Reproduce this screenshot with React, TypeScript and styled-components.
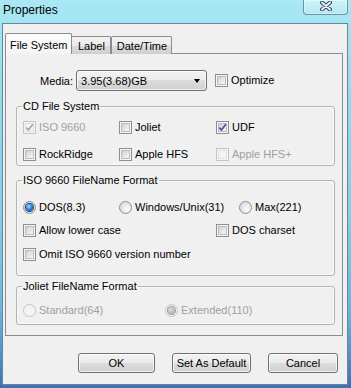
import React from 'react';
import styled, { createGlobalStyle, css } from 'styled-components';

const GlobalStyle = createGlobalStyle`
  html, body {
    margin: 0;
    padding: 0;
    background: #ffffff;
  }
  body {
    font-family: 'Liberation Sans', Arial, sans-serif;
    font-size: 11px;
    color: #000;
  }
`;

const Window = styled.div`
  width: 351px;
  height: 388px;
  box-sizing: border-box;
  display: flex;
  flex-direction: column;
  padding: 0 3px 3px 2px;
  background: linear-gradient(
    180deg,
    #a9e8f4 0%,
    #93def0 20%,
    #7fd2e8 55%,
    #66b8de 80%,
    #4d8fcd 92%,
    #3c70b6 100%
  );
`;

const TitleBar = styled.div`
  height: 23px;
  flex: none;
  display: flex;
  align-items: flex-start;
  justify-content: space-between;
`;

const Title = styled.span`
  font-size: 12px;
  line-height: 14px;
  padding: 3px 0 0 1px;
  color: #000;
`;

const CloseButton = styled.div`
  width: 45px;
  height: 15px;
  box-sizing: border-box;
  display: flex;
  align-items: center;
  justify-content: center;
  padding-bottom: 2px;
  border: 1px solid rgba(40, 70, 95, 0.55);
  border-top: none;
  border-radius: 0 0 4px 4px;
  background: linear-gradient(180deg, rgba(255, 255, 255, 0.45), rgba(255, 255, 255, 0.12));
  box-shadow: inset 0 0 0 1px rgba(255, 255, 255, 0.35);
`;

const Client = styled.div`
  flex: 1;
  display: flex;
  flex-direction: column;
  border: 1px solid #6a8595;
  background: #f0f0f0;
  padding: 9px 4px 0 2px;
`;

const TabStrip = styled.div`
  display: flex;
  align-items: flex-end;
  height: 21px;
  margin-bottom: -1px;
  position: relative;
  z-index: 1;
`;

const Tab = styled.div<{ $active?: boolean; $minWidth?: number }>`
  box-sizing: border-box;
  height: 18px;
  min-width: ${(p) => p.$minWidth ?? 0}px;
  padding: 3px 4px 0;
  text-align: center;
  line-height: 13px;
  border: 1px solid #898c95;
  border-bottom: none;
  border-radius: 2px 2px 0 0;
  background: linear-gradient(180deg, #f2f2f2 0%, #ebebeb 50%, #dddddd 51%, #cfcfcf 100%);
  ${(p) =>
    p.$active &&
    css`
      height: 21px;
      padding-top: 5px;
      background: linear-gradient(180deg, #fcfcfc 0%, #f4f4f4 100%);
      margin-right: -1px;
    `}
`;

const Panel = styled.div`
  display: flex;
  flex-direction: column;
  border: 1px solid #898c95;
  background: #f0f0f0;
  padding: 16px 7px 10px 10px;
`;

const MediaRow = styled.div`
  display: flex;
  align-items: center;
  height: 21px;
  padding-left: 24px;
`;

const MediaLabel = styled.span`
  margin-right: 3px;
`;

const Combo = styled.div`
  box-sizing: border-box;
  width: 131px;
  height: 21px;
  display: flex;
  align-items: center;
  justify-content: space-between;
  padding: 0 4px 0 4px;
  border: 1px solid #707070;
  border-radius: 3px;
  background: linear-gradient(180deg, #f2f2f2 0%, #ebebeb 49%, #dddddd 50%, #cfcfcf 100%);
  box-shadow: inset 0 0 0 1px rgba(255, 255, 255, 0.7);
  margin-right: 8px;
`;

const Arrow = styled.span`
  width: 0;
  height: 0;
  margin-right: 2px;
  border-left: 3.5px solid transparent;
  border-right: 3.5px solid transparent;
  border-top: 4px solid #000;
`;

const Group = styled.fieldset<{ $top: number }>`
  margin: ${(p) => p.$top}px 0 0 0;
  padding: 0;
  border: 1px solid #b3b3b3;
  border-radius: 3px;
  box-shadow: inset 0 0 0 1px rgba(255, 255, 255, 0.6);
`;

const Legend = styled.legend`
  margin-left: 5px;
  padding: 0 1px;
  line-height: 13px;
`;

const OptionRow = styled.div<{ $cols: string; $top: number; $bottom?: number }>`
  display: grid;
  grid-template-columns: ${(p) => p.$cols};
  padding: ${(p) => p.$top}px 0 ${(p) => p.$bottom ?? 0}px 6px;
`;

const Option = styled.label<{ $disabled?: boolean }>`
  display: flex;
  align-items: center;
  gap: 3px;
  height: 13px;
  line-height: 13px;
  white-space: nowrap;
  color: ${(p) => (p.$disabled ? '#a0a0a0' : '#000')};
`;

const Box = styled.span<{ $disabled?: boolean }>`
  box-sizing: border-box;
  width: 13px;
  height: 13px;
  flex: none;
  display: flex;
  align-items: center;
  justify-content: center;
  border: 1px solid ${(p) => (p.$disabled ? '#c4c4c4' : '#8e8f8f')};
  background: #f6f6f6;
  padding: 1px;
`;

const BoxInner = styled.span<{ $disabled?: boolean }>`
  box-sizing: border-box;
  width: 100%;
  height: 100%;
  display: flex;
  align-items: center;
  justify-content: center;
  border: 1px solid ${(p) => (p.$disabled ? '#e0e0e0' : '#b9bcc1')};
  background: ${(p) =>
    p.$disabled
      ? '#f4f4f4'
      : 'linear-gradient(135deg, #cdd0d4 0%, #e4e5e7 50%, #f7f7f7 100%)'};
`;

const RadioDot = styled.span<{ $disabled?: boolean }>`
  box-sizing: border-box;
  width: 13px;
  height: 13px;
  flex: none;
  display: flex;
  align-items: center;
  justify-content: center;
  border-radius: 50%;
  border: 1px solid ${(p) => (p.$disabled ? '#c4c4c4' : '#8e8f8f')};
  background: ${(p) =>
    p.$disabled
      ? '#f4f4f4'
      : 'radial-gradient(circle at 65% 65%, #fbfbfb 0%, #e6e6e6 50%, #cfd1d4 100%)'};
`;

const RadioFill = styled.span<{ $disabled?: boolean }>`
  width: 7px;
  height: 7px;
  border-radius: 50%;
  background: ${(p) =>
    p.$disabled
      ? 'radial-gradient(circle at 40% 35%, #e2e2e2 0%, #b5b5b5 60%, #999 100%)'
      : 'radial-gradient(circle at 40% 35%, #a9dcff 0%, #2a7ed0 50%, #0d3f7c 100%)'};
  box-shadow: 0 0 0 1px ${(p) => (p.$disabled ? '#9a9a9a' : '#0f3f76')};
`;

const ButtonRow = styled.div`
  display: flex;
  justify-content: flex-end;
  gap: 17px;
  margin-top: 17px;
  padding-right: 5px;
`;

const Button = styled.button<{ $width: number }>`
  box-sizing: border-box;
  width: ${(p) => p.$width}px;
  height: 20px;
  padding: 0;
  font-family: 'Liberation Sans', Arial, sans-serif;
  font-size: 11px;
  color: #000;
  border: 1px solid #707070;
  border-radius: 3px;
  background: linear-gradient(180deg, #f2f2f2 0%, #ebebeb 49%, #dddddd 50%, #cfcfcf 100%);
  box-shadow: inset 0 0 0 1px rgba(255, 255, 255, 0.7);
`;

type CheckProps = { label: string; checked?: boolean; disabled?: boolean };

const Check = ({ label, checked, disabled }: CheckProps) => (
  <Option $disabled={disabled}>
    <Box $disabled={disabled}>
      <BoxInner $disabled={disabled}>
        {checked && (
          <svg width="9" height="9" viewBox="0 0 9 9" style={{ position: 'absolute' }}>
            <path
              d="M1.3 4.6 L3.5 7 L7.8 1.3"
              fill="none"
              stroke={disabled ? '#a8a8a8' : '#3f56a6'}
              strokeWidth="1.7"
            />
          </svg>
        )}
      </BoxInner>
    </Box>
    {label}
  </Option>
);

const Radio = ({ label, checked, disabled }: CheckProps) => (
  <Option $disabled={disabled}>
    <RadioDot $disabled={disabled}>{checked && <RadioFill $disabled={disabled} />}</RadioDot>
    {label}
  </Option>
);

const CloseGlyph = () => (
  <svg width="12" height="10" viewBox="0 0 12 10">
    <path d="M2 1.5 L10 8.5 M10 1.5 L2 8.5" stroke="#34475a" strokeWidth="4" strokeLinecap="round" />
    <path d="M2 1.5 L10 8.5 M10 1.5 L2 8.5" stroke="#eef2f5" strokeWidth="2" strokeLinecap="round" />
  </svg>
);

export default function App() {
  return (
    <>
      <GlobalStyle />
      <Window>
        <TitleBar>
          <Title>Properties</Title>
          <CloseButton>
            <CloseGlyph />
          </CloseButton>
        </TitleBar>
        <Client>
          <TabStrip>
            <Tab $active>File System</Tab>
            <Tab $minWidth={40}>Label</Tab>
            <Tab $minWidth={61}>Date/Time</Tab>
          </TabStrip>
          <Panel>
            <MediaRow>
              <MediaLabel>Media:</MediaLabel>
              <Combo>
                <span>3.95(3.68)GB</span>
                <Arrow />
              </Combo>
              <Check label="Optimize" />
            </MediaRow>

            <Group $top={9}>
              <Legend>CD File System</Legend>
              <OptionRow $cols="96px 97px 1fr" $top={8}>
                <Check label="ISO 9660" checked disabled />
                <Check label="Joliet" />
                <Check label="UDF" checked />
              </OptionRow>
              <OptionRow $cols="96px 97px 1fr" $top={14} $bottom={4}>
                <Check label="RockRidge" />
                <Check label="Apple HFS" />
                <Check label="Apple HFS+" disabled />
              </OptionRow>
            </Group>

            <Group $top={8}>
              <Legend>ISO 9660 FileName Format</Legend>
              <OptionRow $cols="96px 120px 1fr" $top={14}>
                <Radio label="DOS(8.3)" checked />
                <Radio label="Windows/Unix(31)" />
                <Radio label="Max(221)" />
              </OptionRow>
              <OptionRow $cols="193px 1fr" $top={10}>
                <Check label="Allow lower case" />
                <Check label="DOS charset" />
              </OptionRow>
              <OptionRow $cols="1fr" $top={11} $bottom={14}>
                <Check label="Omit ISO 9660 version number" />
              </OptionRow>
            </Group>

            <Group $top={4}>
              <Legend>Joliet FileName Format</Legend>
              <OptionRow $cols="142px 1fr" $top={11} $bottom={7}>
                <Radio label="Standard(64)" disabled />
                <Radio label="Extended(110)" checked disabled />
              </OptionRow>
            </Group>
          </Panel>
          <ButtonRow>
            <Button $width={77}>OK</Button>
            <Button $width={79}>Set As Default</Button>
            <Button $width={70}>Cancel</Button>
          </ButtonRow>
        </Client>
      </Window>
    </>
  );
}
